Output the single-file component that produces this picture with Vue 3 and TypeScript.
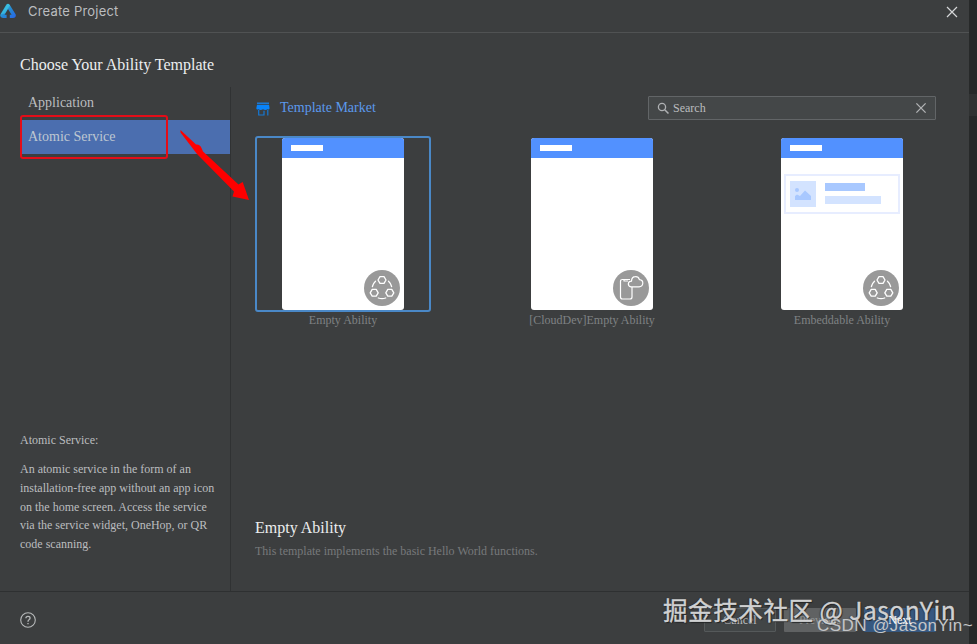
<script setup lang="ts">
import { ref } from 'vue'

interface Template {
  name: string
  kind: 'ring' | 'cloud'
  preview: boolean
}

const categories: string[] = ['Application', 'Atomic Service']
const activeCategory = ref('Atomic Service')
const selected = ref(0)
const templates: Template[] = [
  { name: 'Empty Ability', kind: 'ring', preview: false },
  { name: '[CloudDev]Empty Ability', kind: 'cloud', preview: false },
  { name: 'Embeddable Ability', kind: 'ring', preview: true },
]
</script>

<template>
  <div class="screen">
    <main class="dialog">
      <header class="titlebar">
        <svg class="logo" width="17" height="18" viewBox="0 0 17 18">
          <defs>
            <linearGradient id="lg" x1="0" y1="0" x2="1" y2="1">
              <stop offset="0" stop-color="#45dcec" />
              <stop offset="0.5" stop-color="#258bd2" />
              <stop offset="1" stop-color="#2864e8" />
            </linearGradient>
          </defs>
          <path d="M6.4 2.4 Q8 1 9.5 2.4 L15.7 12.5 Q16.4 16 13 16 L9.8 16 L9.8 12.8 L11.6 12.8 L8 7 L4.6 12.8 L6.6 12.8 L6.6 16 L3 16 Q-.6 15.5 .5 12.3Z" fill="url(#lg)" />
          <path d="M8 1.8 L10 3.2 L5 11.5 L1 12Z" fill="#49dce4" opacity=".45" />
        </svg>
        <span class="title">Create Project</span>
        <svg class="close" width="12" height="12" viewBox="0 0 12 12"><path d="M1 1 L11 11 M11 1 L1 11" fill="none" stroke="#d5d7d8" stroke-width="1.2" /></svg>
      </header>

      <section class="body">
        <h1>Choose Your Ability Template</h1>
        <div class="columns">
          <aside>
            <nav>
              <button
                v-for="c in categories"
                :key="c"
                class="category"
                :class="{ active: c === activeCategory }"
                @click="activeCategory = c"
              >{{ c }}</button>
            </nav>
            <div class="about">
              <p class="about-title">Atomic Service:</p>
              <p class="about-text">
                An atomic service in the form of an<br>
                installation-free app without an app icon<br>
                on the home screen. Access the service<br>
                via the service widget, OneHop, or QR<br>
                code scanning.
              </p>
            </div>
          </aside>

          <div class="content">
            <div class="toolbar">
              <svg width="14" height="14" viewBox="0 0 14 14">
                <path d="M1 1.2H13" stroke="#1683ef" stroke-width="1.3" />
                <path d="M1 2.8H13L13.6 6.2Q13.2 8 11.6 7.2Q9.3 8.6 7 7.2Q4.7 8.6 2.4 7.2Q.6 8 .3 6.2Z" fill="#0883fa" />
                <path d="M2.7 8V13H8V8.7M11.8 8V13.5" fill="none" stroke="#1478d5" stroke-width="1.2" />
              </svg>
              <a class="market">Template Market</a>
              <label class="search">
                <svg width="13" height="13" viewBox="0 0 13 13"><circle cx="5" cy="5" r="3.6" fill="none" stroke="#afb1b3" stroke-width="1.3" /><path d="M7.7 7.7L11.5 11.5" stroke="#afb1b3" stroke-width="1.5" /></svg>
                <span>Search</span>
                <svg width="12" height="12" viewBox="0 0 12 12"><path d="M1.4 1.4L10.6 10.6M10.6 1.4L1.4 10.6" fill="none" stroke="#b2b4b5" stroke-width="1.3" /></svg>
              </label>
            </div>

            <div class="cards">
              <article v-for="(t, i) in templates" :key="t.name" class="card" @click="selected = i">
                <div class="frame" :class="{ selected: selected === i }">
                  <div class="phone">
                    <div class="phone-bar"><i></i></div>
                    <div v-if="t.preview" class="widget">
                      <svg width="26" height="26" viewBox="0 0 26 26">
                        <rect width="26" height="26" fill="#d3e3ff" />
                        <circle cx="7" cy="9" r="2" fill="#a8c8ff" />
                        <path d="M5 19V15L7 13.5L10 15L15 9.5L21 15V19Z" fill="#a8c8ff" />
                      </svg>
                      <div class="lines"><i></i><i></i></div>
                    </div>
                    <svg class="kind" width="36" height="36" viewBox="0 0 36 36">
                      <circle cx="18" cy="18" r="18" fill="#999" />
                      <g v-if="t.kind === 'ring'" fill="none" stroke="#fff" stroke-width="1.3" stroke-linecap="round" stroke-linejoin="round">
                        <path d="M16 6.6H20L22 10L20 13.4H16L14 10Z" />
                        <path d="M8.2 19.4H12.2L14.2 22.8L12.2 26.2H8.2L6.2 22.8Z" />
                        <path d="M23.8 19.4H27.8L29.8 22.8L27.8 26.2H23.8L21.8 22.8Z" />
                        <path d="M11.5 11.3Q9 13.6 8.4 16.5M24.5 11.3Q27 13.6 27.6 16.5M14.3 28Q18 29.3 21.7 28" />
                      </g>
                      <g v-else fill="none" stroke="#fff" stroke-width="1.2" stroke-linejoin="round">
                        <path d="M17 9.5H9.5Q7.5 9.5 7.5 11.5V27Q7.5 29 9.5 29H17Q19 29 19 27V17" />
                        <path d="M11 9.8V11H15" />
                        <path d="M18 16.8Q15 16.2 15.4 13.3Q15.8 11 18.5 11.1Q18.7 6.8 22.4 6.7Q25.4 6.5 26.4 9.6Q30 10 29.8 13.3Q29.5 16.7 26 16.8Z" />
                      </g>
                    </svg>
                  </div>
                </div>
                <span class="name">{{ t.name }}</span>
              </article>
            </div>

            <div class="details">
              <h2>{{ templates[selected].name }}</h2>
              <p>This template implements the basic Hello World functions.</p>
            </div>
          </div>
        </div>
      </section>

      <footer>
        <svg class="help" width="16" height="16" viewBox="0 0 16 16">
          <circle cx="8" cy="8" r="7.3" fill="none" stroke="#b7b9ba" stroke-width="1.1" />
          <path d="M5.9 6.3Q5.9 4.3 8 4.3Q10.1 4.3 10.1 6.1Q10.1 7.1 9 7.8Q8 8.4 8 9.7M8 11V12.3" fill="none" stroke="#b7b9ba" stroke-width="1.3" />
        </svg>
        <div class="actions">
          <button class="cancel">Cancel</button>
          <button class="previous">Previous</button>
          <button class="next"><span>Next</span></button>
        </div>
      </footer>
    </main>
    <div class="backdrop"><i></i></div>

    <div class="highlight"></div>
    <svg class="arrow" width="72" height="72" viewBox="0 0 72 72">
      <path d="M.5 0L16 14.5Q20 14 21.5 18L23 21.5L58.5 54.5L62.7 52L69 70L52.5 66.5L54 61.5L17 24L.5 2.5Z" fill="#fe0000" />
    </svg>
    <div class="mark-main">掘金技术社区 @ JasonYin</div>
    <div class="mark-sub">CSDN @JasonYin~</div>
  </div>
</template>

<style>
body { margin: 0; overflow: hidden; background: #3c3e3f; }
</style>

<style scoped>
* { box-sizing: border-box; }
.screen {
  position: relative;
  display: flex;
  width: 977px;
  height: 644px;
  overflow: hidden;
  background: #3c3e3f;
  color: #bbbdbf;
  font-family: "Liberation Serif", serif;
  font-size: 12px;
}
.dialog { width: 969px; height: 644px; display: flex; flex-direction: column; }
.backdrop { width: 8px; background: #272929; padding-top: 94px; }
.backdrop i { display: block; height: 22px; background: #303232; }
h1, h2, p { margin: 0; font-weight: normal; }
button { border: 0; margin: 0; font-family: inherit; color: inherit; }

.titlebar { height: 33px; display: flex; align-items: flex-start; border-bottom: 1px solid #505253; flex: none; }
.logo { margin-top: 2px; }
.title { margin-left: 11px; line-height: 23px; font-family: Inter, sans-serif; font-size: 13px; letter-spacing: 0.2px; white-space: nowrap; }
.close { margin: 6px 11px 0 auto; }

.body { height: 558px; flex: none; }
h1 { height: 54px; padding: 22px 0 0 20px; font-size: 16px; line-height: 20px; color: #eceeef; }
.columns { display: flex; height: 504px; }
aside { width: 231px; border-right: 1px solid #303233; display: flex; flex-direction: column; justify-content: space-between; }
nav { padding-left: 20px; display: flex; flex-direction: column; }
.category { height: 33px; padding: 0 8px 2px; text-align: left; background: transparent; font-size: 14px; }
.category.active { height: 34px; padding-bottom: 0; background: #4b6eaf; color: #bec7d1; }
.about { padding: 0 0 37px 20px; white-space: nowrap; }
.about-title { line-height: 18px; margin-bottom: 11px; }
.about-text { line-height: 18.8px; }

.content { flex: 1; padding: 9px 33px 0 24px; display: flex; flex-direction: column; }
.toolbar { height: 24px; display: flex; align-items: center; }
.toolbar > svg { margin: 2px 0 0 1px; }
.market { margin-left: 10px; color: #5b99ed; font-size: 14px; }
.search { margin-left: auto; width: 288px; height: 24px; border: 1px solid #626567; border-radius: 1px; background: #444748; display: flex; align-items: center; padding: 0 8px; }
.search span { margin-left: 3px; flex: 1; }

.cards { display: grid; grid-template-columns: 249px 250px 176px; margin-top: 16px; }
.card { width: 176px; display: flex; flex-direction: column; align-items: center; }
.frame { width: 176px; height: 176px; border: 2px solid transparent; border-radius: 3px; display: flex; justify-content: center; }
.frame.selected { border-color: #4a88c7; }
.phone { position: relative; width: 122px; height: 172px; background: #fff; border-radius: 3px; overflow: hidden; }
.phone-bar { height: 20px; background: #5291ff; padding: 7px 9px; }
.phone-bar i { display: block; width: 32px; height: 6px; background: #fff; }
.widget { margin: 16px 3px 0; height: 40px; border: 2px solid #e7edff; padding: 5px 4px; display: flex; }
.lines { margin: 2px 0 0 9px; }
.lines i { display: block; width: 40px; height: 8px; background: #a8c8ff; }
.lines i + i { width: 56px; margin-top: 5px; background: #d3e3ff; }
.kind { position: absolute; right: 4px; bottom: 4px; }
.name { line-height: 16px; color: #7f8284; white-space: nowrap; }

.details { margin-top: auto; padding-bottom: 32px; }
h2 { font-size: 16px; line-height: 20px; color: #eceeef; }
.details p { margin-top: 5px; line-height: 16px; color: #77797b; }

footer { flex: 1; border-top: 1px solid #2e3031; display: flex; align-items: flex-start; padding: 16px 33px 0 20px; }
.help { margin-top: 4px; }
.actions { margin-left: auto; display: flex; gap: 8px; }
.actions button { width: 72px; height: 24px; font-size: 12px; padding: 0; border-radius: 1px; }
.actions .cancel { background: #424647; border: 1px solid #55595a; }
.actions .previous { background: #606263; color: #929596; }
.actions .next { background: #365880; color: #fff; }
.next span { position: relative; z-index: 2; }

.highlight { position: absolute; left: 20px; top: 115px; width: 148px; height: 44px; border: 2px solid #e30d18; border-radius: 3px; }
.arrow { position: absolute; left: 180px; top: 130px; }
.mark-main { position: absolute; left: 663px; top: 591px; font: 24.6px/36px "Noto Sans CJK SC", sans-serif; letter-spacing: 0.5px; color: #d0d1d2; -webkit-text-stroke: 0.4px #d0d1d2; text-shadow: 1px 1px 1px #202122, -1px 0 1px #303132; white-space: nowrap; }
.mark-sub { position: absolute; left: 817px; top: 616px; font: 17px/20px "Liberation Sans", sans-serif; color: #c3c5c7; letter-spacing: 0.45px; white-space: nowrap; }
</style>
